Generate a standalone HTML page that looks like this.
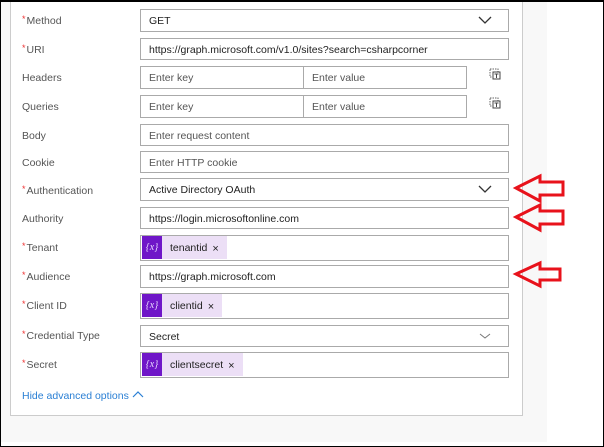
<!DOCTYPE html>
<html><head><meta charset="utf-8"><style>
*{box-sizing:border-box;margin:0;padding:0}
body{width:604px;height:447px;background:#fff;font-family:"Liberation Sans",sans-serif;font-size:10.5px;color:#333;position:relative;overflow:hidden}
.frame{position:absolute;left:0;top:0;width:604px;height:447px;border:2px solid #000;border-width:2px 1px 1px 1px;pointer-events:none;z-index:5}
.bg{position:absolute;left:1px;top:2px;width:546px;height:440px;background:#f8f8f8}
.card{position:absolute;left:10px;top:0;width:513px;height:416px;background:#fff;border:1px solid #ccc;border-top:none}
.lbl{position:absolute;left:22px;color:#555;font-size:10.5px}
.lbl b{color:#e33;font-weight:normal;font-size:9px;position:relative;top:-2px;margin-right:1px}
.in{position:absolute;left:140px;width:369px;height:23px;border:1px solid #aaa;background:#fff;padding:5px 8px;color:#222;white-space:nowrap}
.ph{color:#555}
.chev{position:absolute;right:16px;top:4px}
.tok{display:inline-flex;align-items:center;height:23px;margin:-5px 0 0 -7px;background:#ecdff6;padding-right:8px;font-size:10.5px}
.tok i{display:inline-block;width:20px;height:23px;background:#6f16c8;color:#e8d8ff;font-style:italic;font-family:"Liberation Serif",serif;font-size:10px;text-align:center;line-height:23px;margin-right:8px}
.tok span{margin-left:5px;font-size:11px;position:relative;top:1px}
.ico{position:absolute;left:489px;width:12px;height:12px}
.link{position:absolute;left:22px;top:390px;color:#2a7fd4;font-size:10.5px}
</style></head><body>
<div class="bg"></div>
<div class="card"></div>

<div class="lbl" style="top:15px"><b>*</b>Method</div>
<div class="in" style="top:9px;height:23px">GET<svg class="chev" width="14" height="12"><path d="M1 3 L7 9 L13 3" fill="none" stroke="#333" stroke-width="1.3"/></svg></div>

<div class="lbl" style="top:44px"><b>*</b>URI</div>
<div class="in" style="top:38px;height:22px">https://graph.microsoft.com/v1.0/sites?search=csharpcorner</div>

<div class="lbl" style="top:72px">Headers</div>
<div class="in ph" style="top:66px;width:164px">Enter key</div>
<div class="in ph" style="top:66px;left:303px;width:164px">Enter value</div>
<svg class="ico" style="top:68px" viewBox="0 0 12 12"><rect x="1" y="1" width="8" height="8" fill="none" stroke="#666" stroke-dasharray="1.5 1"/><rect x="4" y="4" width="7" height="7" fill="#fff" stroke="#444"/><path d="M5.5 6h4M7.5 6v4" stroke="#444"/></svg>

<div class="lbl" style="top:101px">Queries</div>
<div class="in ph" style="top:95px;width:164px">Enter key</div>
<div class="in ph" style="top:95px;left:303px;width:164px">Enter value</div>
<svg class="ico" style="top:97px" viewBox="0 0 12 12"><rect x="1" y="1" width="8" height="8" fill="none" stroke="#666" stroke-dasharray="1.5 1"/><rect x="4" y="4" width="7" height="7" fill="#fff" stroke="#444"/><path d="M5.5 6h4M7.5 6v4" stroke="#444"/></svg>

<div class="lbl" style="top:130px">Body</div>
<div class="in ph" style="top:124px;height:22px">Enter request content</div>

<div class="lbl" style="top:157px">Cookie</div>
<div class="in ph" style="top:151px;height:22px">Enter HTTP cookie</div>

<div class="lbl" style="top:185px"><b>*</b>Authentication</div>
<div class="in" style="top:178px">Active Directory OAuth<svg class="chev" width="14" height="12"><path d="M1 3 L7 9 L13 3" fill="none" stroke="#333" stroke-width="1.3"/></svg></div>

<div class="lbl" style="top:213px">Authority</div>
<div class="in" style="top:207px;height:22px">https://login.microsoftonline.com</div>

<div class="lbl" style="top:242px"><b>*</b>Tenant</div>
<div class="in" style="top:235px;height:26px"><span class="tok"><i>{x}</i>tenantid<span>×</span></span></div>

<div class="lbl" style="top:271px"><b>*</b>Audience</div>
<div class="in" style="top:265px;height:23px">https://graph.microsoft.com</div>

<div class="lbl" style="top:300px"><b>*</b>Client ID</div>
<div class="in" style="top:293px;height:26px"><span class="tok"><i>{x}</i>clientid<span>×</span></span></div>

<div class="lbl" style="top:330px"><b>*</b>Credential Type</div>
<div class="in" style="top:325px;height:22px">Secret<svg class="chev" width="14" height="12" style="top:4px"><path d="M2 4 L7 8 L12 4" fill="none" stroke="#777" stroke-width="1"/></svg></div>

<div class="lbl" style="top:359px"><b>*</b>Secret</div>
<div class="in" style="top:352px;height:26px"><span class="tok"><i>{x}</i>clientsecret<span>×</span></span></div>

<div class="link">Hide advanced options <svg width="12" height="8" style="vertical-align:1px"><path d="M1 7 L6 2 L11 7" fill="none" stroke="#2a7fd4" stroke-width="1.2"/></svg></div>

<svg style="position:absolute;left:0;top:0" width="604" height="447">
<g fill="none" stroke="#e8121b" stroke-width="3" stroke-linejoin="miter">
<path d="M516 188 L540 176 L540 182 L563 182 L563 195 L540 195 L540 201 Z"/>
<path d="M516 217 L540 205 L540 211 L563 211 L563 224 L540 224 L540 230 Z"/>
<path d="M516 274 L540 263 L540 269 L560 269 L560 280 L540 280 L540 286 Z"/>
</g></svg>
<div class="frame"></div>
</body></html>
